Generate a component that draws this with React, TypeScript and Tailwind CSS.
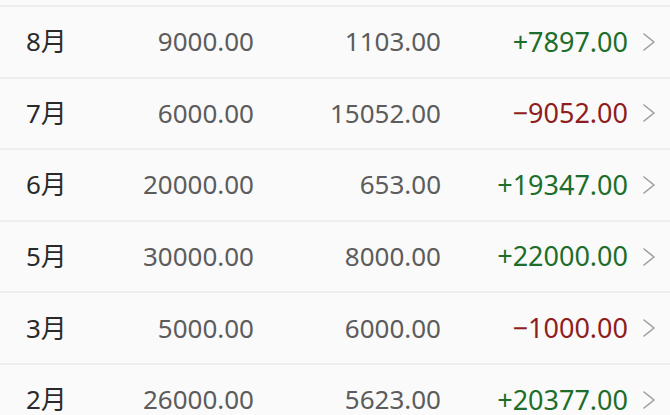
const rows = [
  { m: "8月", inc: "9000.00", exp: "1103.00", net: "+7897.00", up: true },
  { m: "7月", inc: "6000.00", exp: "15052.00", net: "−9052.00", up: false },
  { m: "6月", inc: "20000.00", exp: "653.00", net: "+19347.00", up: true },
  { m: "5月", inc: "30000.00", exp: "8000.00", net: "+22000.00", up: true },
  { m: "3月", inc: "5000.00", exp: "6000.00", net: "−1000.00", up: false },
  { m: "2月", inc: "26000.00", exp: "5623.00", net: "+20377.00", up: true },
];

export default function App() {
  return (
    <div
      className="h-[415px] w-[670px] overflow-hidden bg-[#fafafa] text-[26px]"
      style={{ fontFamily: '"Noto Sans", "Noto Sans CJK SC", sans-serif' }}
    >
      <div className="h-[5px]" />
      {rows.map((r) => (
        <div key={r.m} className="flex h-[71.6px] items-center border-t-2 border-[#eeeeee] pl-[26px]">
          <span className="w-[100px] text-[#2a2a2a]">{r.m}</span>
          <span className="w-[128px] text-right text-[#5c5c5c]">{r.inc}</span>
          <span className="w-[187px] text-right text-[#5c5c5c]">{r.exp}</span>
          <span className={`w-[187px] text-right text-[27px] ${r.up ? "text-[#1d6e2a]" : "text-[#8f1d1d]"}`}>
            {r.net}
          </span>
          <Chevron />
        </div>
      ))}
    </div>
  );
}

function Chevron() {
  return (
    <svg viewBox="0 0 12 18" className="ml-[15px] h-[18px] w-[12px]" fill="none" stroke="#9a9a9a" strokeWidth="1.5">
      <path d="M1 1 L11 9 L1 17" strokeLinejoin="round" strokeLinecap="round" />
    </svg>
  );
}
